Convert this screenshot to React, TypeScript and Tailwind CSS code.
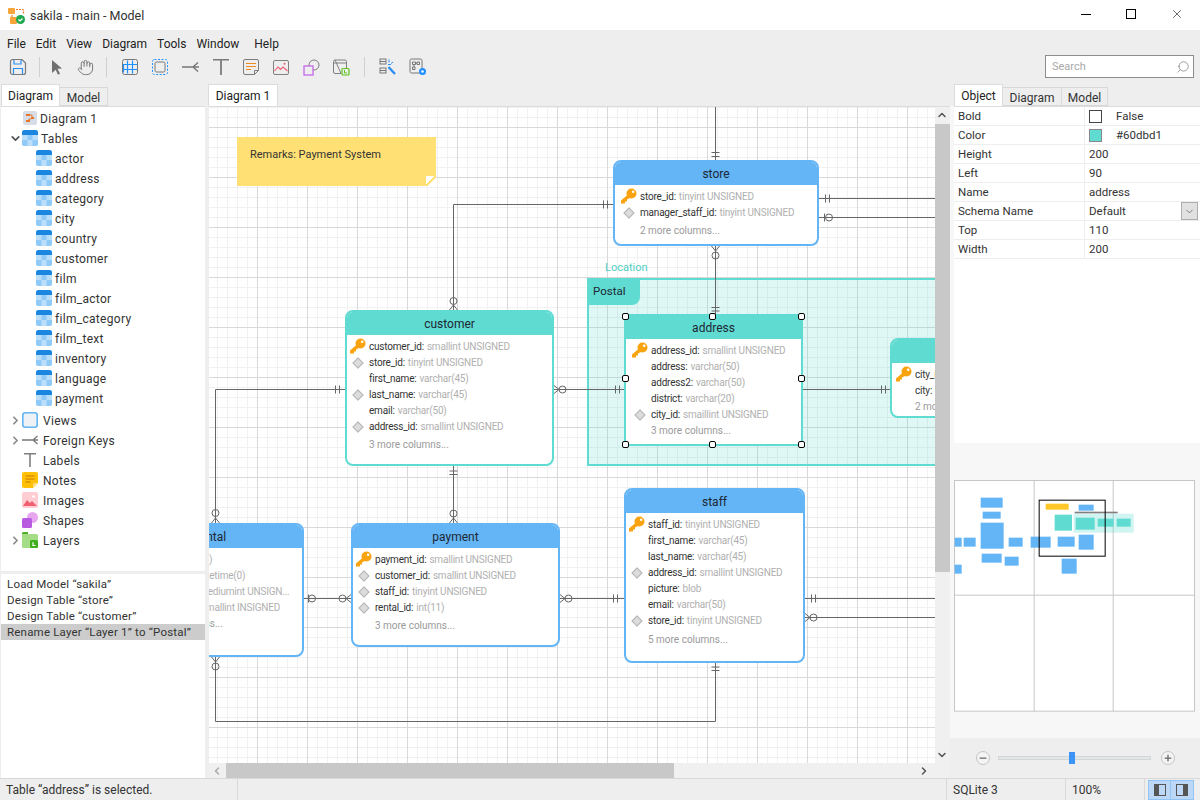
import { ChevronDown, ChevronLeft, ChevronRight, ChevronUp, Hand, Minus, Plus, Search, X } from "lucide-react"

type Column = [string, string, ("key" | "fk")?]

interface EntityProps {
  title: string
  teal?: boolean
  square?: boolean
  columns: Column[]
  more: string
  pos: string
  indent: string
  moreGap?: string
}

// Table box on the diagram canvas
function Entity({ title, teal, square, columns, more, pos, indent, moreGap = "mt-[2px]" }: EntityProps) {
  const edge = teal ? "border-[#60dbd1]" : "border-[#64b5f6]"
  const head = teal ? "bg-[#60dbd1]" : "bg-[#64b5f6]"
  return (
    <div className={`absolute overflow-hidden bg-white border-2 ${edge} ${square ? "" : "rounded-[8px]"} ${pos}`}>
      <div className={`-mt-[2px] -mx-[2px] h-[25px] pt-[2px] flex items-center justify-center text-[12px] text-[#1c2733] ${head}`}>{title}</div>
      <div className={`pt-[3px] ${indent}`}>
        {columns.map(([name, type, kind]) => (
          <div key={name} className="relative h-[16px] flex items-center whitespace-nowrap text-[10px] tracking-[-0.2px] leading-none">
            {kind === "key" && <KeyIcon />}
            {kind === "fk" && <div className="absolute -left-[15px] top-[5px] w-[8px] h-[8px] rotate-45 bg-[#dcdcdc] border border-[#b5b5b5]"></div>}
            <span className="mt-[2px] text-[#333]">{name}:</span>
            <span className="mt-[2px] ml-[3px] text-[#b0b0b0]">{type}</span>
          </div>
        ))}
        <div className={`h-[16px] pt-[2px] flex items-center whitespace-nowrap text-[10px] leading-none text-[#9a9a9a] ${moreGap}`}>{more}</div>
      </div>
    </div>
  )
}

function KeyIcon() {
  return (
    <svg className="absolute -left-[20px] top-0" width="17" height="16" viewBox="0 0 17 16">
      <circle cx="11.500" cy="5.500" r="5" fill="#f9a30f" />
      <path d="M8 6.500L1 12.500V15.500H5V13.500H7V11.500L11 9.500z" fill="#f9a30f" />
      <circle cx="13.200" cy="3.800" r="1.300" fill="#fff" />
    </svg>
  )
}

const vBars = (x: number, ys: number[]) => ys.map((y) => `M${x - 4} ${y}H${x + 4}`).join("")
const hBars = (y: number, xs: number[]) => xs.map((x) => `M${x} ${y - 4}V${y + 4}`).join("")

const wires =
  "M715.5 107V160M715.5 246V314M613 204.500H453.500V310M819 198.500H935M819 217.500H935M554 389.500H624M803 389.500H890M345 389.500H215.500V523M453.500 466V523M304 598.500H351M560 598.500H624M805 598.500H935M805 617.500H935M715.500 663V721.500H215.500V657"

const ticks = [
  vBars(715.5, [152.5, 156.5, 307.5, 311]),
  vBars(453.5, [471, 474.5]),
  vBars(715.5, [667, 670.5]),
  hBars(204.5, [603.5, 607.5]),
  hBars(198.5, [825.5, 829.5]),
  hBars(217.5, [824.5]),
  hBars(389.5, [615.5, 619.5, 881.5, 885.5, 335.5, 339.5]),
  hBars(598.5, [308.5, 613.5, 617.5, 811.5, 815.5]),
].join("")

const crows =
  "M449.500 310L453.500 305L457.500 310M211.500 523L215.500 518L219.500 523M449.500 523L453.500 518L457.500 523" +
  "M711.500 246L715.500 251L719.500 246M211.500 657L215.500 662L219.500 657" +
  "M554 385.500L559 389.500L554 393.500M351 594.500L346 598.500L351 602.500M560 594.500L565 598.500L560 602.500M805 613.500L810 617.500L805 621.500"

const circles = [
  [715.5, 255.5],
  [829, 217.5],
  [453.5, 301],
  [562.5, 389.5],
  [215.5, 513],
  [453.5, 513.5],
  [312, 598.5],
  [342.5, 598.5],
  [568.5, 598.5],
  [813.5, 617.5],
  [215.5, 666.5],
]

// Connector lines, in screen coordinates
function Relations() {
  return (
    <svg className="absolute left-0 top-0" width="726" height="656" viewBox="209 107 726 656" fill="none" stroke="#666" strokeWidth="1">
      <path d={wires} />
      <path d={ticks} />
      <path d={crows} />
      {circles.map(([cx, cy]) => (
        <circle key={`${cx}-${cy}`} cx={cx} cy={cy} r="3.5" />
      ))}
    </svg>
  )
}

function Handle({ pos }: { pos: string }) {
  return <div className={`absolute w-[7px] h-[7px] bg-white border-[1.5px] border-black rounded-[2px] ${pos}`}></div>
}

function Canvas() {
  return (
    <div className="relative w-[726px] h-full overflow-hidden bg-white [background-image:linear-gradient(#d9d9d9_1px,transparent_1px),linear-gradient(90deg,#d9d9d9_1px,transparent_1px),linear-gradient(#f1f1f1_1px,transparent_1px),linear-gradient(90deg,#f1f1f1_1px,transparent_1px)] [background-size:50px_50px,50px_50px,10px_10px,10px_10px] [background-position:48px_20px,48px_20px,8px_0px,8px_0px]">
      <div className="absolute left-[28px] top-[30px] w-[199px] h-[49px] bg-[#ffe074] pl-[13px] pt-[10px] text-[11px] text-[#333]">
        Remarks: Payment System
        <div className="absolute right-0 bottom-0 w-[10px] h-[10px] bg-[linear-gradient(135deg,#fff_0%,#fff_42%,#ffe074_42%,#ffe074_56%,#fff_56%)]"></div>
      </div>

      <div className="absolute left-[396px] top-[153px] text-[11px] text-[#4fcfc4]">Location</div>
      <div className="absolute left-[378px] top-[171px] w-[420px] h-[188px] border-2 border-[#60dbd1] bg-[#60dbd1]/20">
        <div className="-mt-[2px] -ml-[2px] w-[53px] h-[27px] pl-[6px] flex items-center bg-[#60dbd1] rounded-br-[8px] text-[11.5px] text-[#1c2733]">Postal</div>
      </div>

      <Relations />

      <Entity
        title="store"
        pos="left-[404px] top-[53px] w-[206px] h-[86px]"
        indent="pl-[25px]"
        columns={[
          ["store_id", "tinyint UNSIGNED", "key"],
          ["manager_staff_id", "tinyint UNSIGNED", "fk"],
        ]}
        more="2 more columns..."
      />
      <Entity
        title="customer"
        teal
        pos="left-[136px] top-[203px] w-[209px] h-[156px]"
        indent="pl-[22px]"
        columns={[
          ["customer_id", "smallint UNSIGNED", "key"],
          ["store_id", "tinyint UNSIGNED", "fk"],
          ["first_name", "varchar(45)"],
          ["last_name", "varchar(45)", "fk"],
          ["email", "varchar(50)"],
          ["address_id", "smallint UNSIGNED", "fk"],
        ]}
        more="3 more columns..."
      />
      <Entity
        title="address"
        teal
        square
        pos="left-[415px] top-[207px] w-[179px] h-[132px]"
        indent="pl-[25px]"
        moreGap="mt-0"
        columns={[
          ["address_id", "smallint UNSIGNED", "key"],
          ["address", "varchar(50)"],
          ["address2", "varchar(50)"],
          ["district", "varchar(20)"],
          ["city_id", "smaillint UNSIGNED", "fk"],
        ]}
        more="3 more columns..."
      />
      <Handle pos="left-[413px] top-[206px]" />
      <Handle pos="left-[500px] top-[206px]" />
      <Handle pos="left-[589px] top-[206px]" />
      <Handle pos="left-[413px] top-[268px]" />
      <Handle pos="left-[589px] top-[268px]" />
      <Handle pos="left-[413px] top-[334px]" />
      <Handle pos="left-[500px] top-[334px]" />
      <Handle pos="left-[589px] top-[334px]" />
      <Entity
        title="city"
        teal
        pos="left-[681px] top-[231px] w-[150px] h-[80px]"
        indent="pl-[23px]"
        columns={[
          ["city_id", "smallint UNSIGNED", "key"],
          ["city", "varchar(50)"],
        ]}
        more="2 more columns..."
        moreGap="mt-0"
      />
      <Entity
        title="staff"
        pos="left-[415px] top-[381px] w-[181px] h-[175px]"
        indent="pl-[22px]"
        moreGap="mt-[3px]"
        columns={[
          ["staff_id", "tinyint UNSIGNED", "key"],
          ["first_name", "varchar(45)"],
          ["last_name", "varchar(45)"],
          ["address_id", "smallint UNSIGNED", "fk"],
          ["picture", "blob"],
          ["email", "varchar(50)"],
          ["store_id", "tinyint UNSIGNED", "fk"],
        ]}
        more="5 more columns..."
      />
      <Entity
        title="payment"
        pos="left-[142px] top-[416px] w-[209px] h-[124px]"
        indent="pl-[22px]"
        columns={[
          ["payment_id", "smallint UNSIGNED", "key"],
          ["customer_id", "smallint UNSIGNED", "fk"],
          ["staff_id", "tinyint UNSIGNED", "fk"],
          ["rental_id", "int(11)", "fk"],
        ]}
        more="3 more columns..."
      />
      <Entity
        title="rental"
        pos="-left-[91px] top-[416px] w-[186px] h-[134px]"
        indent="pl-[23px]"
        moreGap="mt-0"
        columns={[
          ["rental_id", "int(11)", "key"],
          ["rental_date", "datetime(0)"],
          ["inventory_id", "mediumint UNSIGN...", "fk"],
          ["customer_id", "smallint INSIGNED", "fk"],
        ]}
        more="3 more columns..."
      />
    </div>
  )
}

function TableIcon({ className = "" }: { className?: string }) {
  return (
    <svg className={`shrink-0 ${className}`} width="16" height="16" viewBox="0 0 16 16">
      <rect width="16" height="16" rx="2.500" fill="#bbdefb" />
      <path d="M0 2.500A2.500 2.500 0 0 1 2.500 0h11A2.500 2.500 0 0 1 16 2.500V5H0z" fill="#1a86e0" />
      <path d="M5.500 5h5v5h-5zM0 10h5.500v6H2.500A2.500 2.500 0 0 1 0 13.500zM10.500 10H16v3.500a2.500 2.500 0 0 1-2.500 2.500h-3z" fill="#90caf9" />
    </svg>
  )
}

const tables = ["actor", "address", "category", "city", "country", "customer", "film", "film_actor", "film_category", "film_text", "inventory", "language", "payment"]

function Caret({ open }: { open?: boolean }) {
  return open ? (
    <ChevronDown className="shrink-0" size={13} strokeWidth={3.2} color="#555" />
  ) : (
    <ChevronRight className="shrink-0" size={13} strokeWidth={3.2} color="#8a8a8a" />
  )
}

function GroupRow({ icon, label, caret, open }: { icon: React.ReactNode; label: string; caret?: boolean; open?: boolean }) {
  return (
    <div className="h-[20px] flex items-center pl-[7px]">
      <div className="w-[14px] flex justify-center">{caret && <Caret open={open} />}</div>
      <div className="w-[16px] h-[16px] flex items-center justify-center">{icon}</div>
      <span className={`pt-[2px] ${open ? "ml-[3px]" : "ml-[5px]"}`}>{label}</span>
    </div>
  )
}

function Tree() {
  return (
    <div className="flex-1 bg-white text-[12px] text-[#333] pt-[1px] tracking-[0.3px]">
      <div className="h-[20px] flex items-center pl-[22px]">
        <svg width="14" height="14" viewBox="0 0 14 14">
          <rect width="14" height="14" rx="2" fill="#d6dde6" />
          <path d="M3 3h4v2H3zM8 6h3v2H8zM3 9h4v2H3z" fill="#e8742a" />
          <path d="M7 4h2v2M8 8H6v2" fill="none" stroke="#e8742a" />
        </svg>
        <span className="ml-[3px] pt-[2px]">Diagram 1</span>
      </div>
      <GroupRow label="Tables" caret open icon={<TableIcon />} />
      {tables.map((name) => (
        <div key={name} className="h-[20px] flex items-center pl-[35px]">
          <TableIcon />
          <span className="ml-[3px] pt-[2px]">{name}</span>
        </div>
      ))}
      <div className="h-[2px]"></div>
      <GroupRow
        label="Views"
        caret
        icon={
          <svg width="16" height="16" viewBox="0 0 16 16">
            <rect x="0.800" y="0.800" width="14.400" height="14.400" rx="2.500" fill="#eef1f5" stroke="#64b5f6" strokeWidth="1.600" />
          </svg>
        }
      />
      <GroupRow
        label="Foreign Keys"
        caret
        icon={
          <svg width="16" height="16" viewBox="0 0 16 16" fill="none" stroke="#777" strokeWidth="1.300">
            <path d="M0 8h16M15.500 4L11 8l4.500 4" />
          </svg>
        }
      />
      <GroupRow
        label="Labels"
        icon={
          <svg width="16" height="16" viewBox="0 0 16 16" fill="#808080">
            <path d="M2 1h12v1.500H8.800V15H7.200V2.500H2z" />
          </svg>
        }
      />
      <GroupRow
        label="Notes"
        icon={
          <svg width="16" height="16" viewBox="0 0 16 16">
            <path d="M2 0h12a2 2 0 0 1 2 2v9l-5 5H2a2 2 0 0 1-2-2V2a2 2 0 0 1 2-2z" fill="#ffc107" />
            <path d="M16 11h-3.500a1.500 1.500 0 0 0-1.500 1.500V16z" fill="#ffe082" />
            <path d="M3.500 4h9M3.500 7h9M3.500 10h5" stroke="#c77700" strokeWidth="1" />
          </svg>
        }
      />
      <GroupRow
        label="Images"
        icon={
          <svg width="16" height="16" viewBox="0 0 16 16">
            <rect width="16" height="16" rx="2" fill="#ffcdd2" />
            <path d="M1 14l4-6 3 3 2-2 5 5z" fill="#ef5f72" />
            <circle cx="11.500" cy="4.500" r="1.300" fill="#fff" />
          </svg>
        }
      />
      <GroupRow
        label="Shapes"
        icon={
          <svg width="16" height="16" viewBox="0 0 16 16">
            <circle cx="10.500" cy="5.500" r="5.500" fill="#e8a8f0" />
            <rect y="6" width="10" height="10" rx="1.500" fill="#b85be0" />
          </svg>
        }
      />
      <GroupRow
        label="Layers"
        caret
        icon={
          <svg width="16" height="16" viewBox="0 0 16 16">
            <path d="M1.500 0H6v2h8.500A1.500 1.500 0 0 1 16 3.500V16H1.500A1.500 1.500 0 0 1 0 14.500v-13A1.500 1.500 0 0 1 1.500 0z" fill="#a5dc86" />
            <path d="M0 2V1.500A1.500 1.500 0 0 1 1.500 0H6v2z" fill="#4caf25" />
            <rect x="8" y="8" width="8" height="8" rx="1.500" fill="#3fae1c" />
            <path d="M11 10.200v3.300h2.500" stroke="#fff" fill="none" strokeWidth="1.200" />
          </svg>
        }
      />
    </div>
  )
}

function History() {
  return (
    <div className="h-[204px] mt-[3px] bg-white pt-[2px] text-[11.5px] text-[#333] tracking-[0.2px]">
      <div className="h-[16px] pl-[6px] pt-[2px] flex items-center">Load Model “sakila”</div>
      <div className="h-[16px] pl-[6px] pt-[2px] flex items-center">Design Table “store”</div>
      <div className="h-[16px] pl-[6px] pt-[2px] flex items-center">Design Table “customer”</div>
      <div className="h-[16px] pl-[6px] pt-[2px] flex items-center bg-[#cccccc]">Rename Layer “Layer 1” to “Postal”</div>
    </div>
  )
}

function Tab({ label, active, width }: { label: string; active?: boolean; width: string }) {
  return active ? (
    <div className={`h-[22px] bg-white border border-b-0 border-[#dcdcdc] flex items-center justify-center text-[12px] text-[#222] ${width}`}>{label}</div>
  ) : (
    <div className={`h-[19px] pt-[2px] bg-[#eeeeee] border border-l-0 border-[#d8d8d8] flex items-center justify-center text-[12px] text-[#333] ${width}`}>{label}</div>
  )
}

function ToolIcon({ children, width = "w-[30px]" }: { children: React.ReactNode; width?: string }) {
  return <div className={`h-[24px] flex items-center justify-center ${width}`}>{children}</div>
}

function Toolbar() {
  return (
    <div className="h-[30px] flex items-start pt-[1px] pl-[3px] relative">
      <ToolIcon>
        <svg width="18" height="18" viewBox="0 0 18 18" fill="none">
          <path d="M3 1.500h10l3.500 3.500v9.500a2 2 0 0 1-2 2h-11a2 2 0 0 1-2-2v-11a2 2 0 0 1 2-2z" stroke="#7a7a7a" strokeWidth="1.200" />
          <path d="M5 2v4h7V2" stroke="#2b8ef0" strokeWidth="1.200" />
          <path d="M4.500 16v-5.500h9V16" stroke="#2b8ef0" strokeWidth="1.200" />
        </svg>
      </ToolIcon>
      <div className="w-px h-[20px] mt-[2px] bg-[#d0d0d0] ml-[6px] mr-[3px]"></div>
      <ToolIcon width="w-[28px]">
        <svg width="12" height="15" viewBox="0 0 12 15" fill="#707070">
          <path d="M1 0l10 8.500-4.500.3 2.500 5-2 1-2.300-5L1 13z" />
        </svg>
      </ToolIcon>
      <ToolIcon width="w-[28px]">
        <Hand size={17} strokeWidth={1.4} color="#777" />
      </ToolIcon>
      <div className="w-px h-[20px] mt-[2px] bg-[#d0d0d0] ml-[7px] mr-[8px]"></div>
      <ToolIcon>
        <svg width="16" height="16" viewBox="0 0 16 16" fill="none">
          <rect x="0.500" y="0.500" width="15" height="15" rx="2" stroke="#777" />
          <path d="M1 5.500h14M1 10.500h14M5.500 1.500v13M10.500 1.500v13M1.500 5.500v8" stroke="#1e90ff" strokeWidth="1.200" />
        </svg>
      </ToolIcon>
      <ToolIcon>
        <svg width="16" height="16" viewBox="0 0 16 16" fill="none">
          <rect x="0.500" y="0.500" width="15" height="15" rx="2" stroke="#1e90ff" strokeDasharray="2 1.500" />
          <rect x="3" y="3" width="10" height="10" rx="1.500" stroke="#777" />
        </svg>
      </ToolIcon>
      <ToolIcon>
        <svg width="17" height="12" viewBox="0 0 17 12" fill="none" stroke="#777" strokeWidth="1.400">
          <path d="M0 6h17M16 1.500L11 6l5 4.500" />
        </svg>
      </ToolIcon>
      <div className="w-px"></div>
      <ToolIcon>
        <svg width="16" height="16" viewBox="0 0 16 16" fill="#7a7a7a">
          <path d="M0 0h16v1.600H8.900V16H7.100V1.600H0z" />
        </svg>
      </ToolIcon>
      <ToolIcon>
        <svg width="16" height="16" viewBox="0 0 16 16" fill="none">
          <path d="M2 .5h12A1.500 1.500 0 0 1 15.500 2v9.500l-4 4H2A1.500 1.500 0 0 1 .5 14V2A1.500 1.500 0 0 1 2 .5z" stroke="#7d7d7d" />
          <path d="M3 4.500h10M3 7.500h10M3 10.500h5" stroke="#f08a1c" />
          <path d="M11.500 15.500v-4h4" stroke="#7d7d7d" />
        </svg>
      </ToolIcon>
      <ToolIcon>
        <svg width="16" height="15" viewBox="0 0 16 15" fill="none">
          <rect x="0.500" y="0.500" width="15" height="14" rx="1.500" stroke="#808080" />
          <path d="M1.500 11l3.500-4 2.500 2.500L10 7l4.500 4" stroke="#ef5f72" strokeWidth="1.100" />
          <circle cx="11.500" cy="3.800" r="1" fill="#ef5f72" />
        </svg>
      </ToolIcon>
      <ToolIcon>
        <svg width="17" height="17" viewBox="0 0 17 17" fill="none">
          <circle cx="11" cy="6" r="5" stroke="#808080" />
          <rect x="1" y="7" width="9" height="9" fill="#eeeeee" stroke="#c05ce8" strokeWidth="1.200" />
        </svg>
      </ToolIcon>
      <ToolIcon>
        <svg width="17" height="17" viewBox="0 0 17 17" fill="none">
          <path d="M2 1h10a1.500 1.500 0 0 1 1.500 1.500V9M8 14.500H2A1.500 1.500 0 0 1 .5 13V2.500A1.500 1.500 0 0 1 2 1zM1 4h12" stroke="#808080" />
          <rect x="9" y="9.500" width="7" height="6.500" rx="1" fill="#eeeeee" stroke="#5cc41a" strokeWidth="1.200" />
          <path d="M11.500 11v3H14" stroke="#5cc41a" />
        </svg>
      </ToolIcon>
      <div className="w-px h-[20px] mt-[2px] bg-[#d0d0d0] ml-[8px] mr-[8px]"></div>
      <ToolIcon>
        <svg width="18" height="18" viewBox="0 0 18 18" fill="none">
          <rect x="1" y="1" width="6" height="5" stroke="#777" />
          <path d="M1 3.500h6" stroke="#777" />
          <rect x="1" y="10" width="6" height="5" stroke="#777" />
          <path d="M1 12.500h6" stroke="#777" />
          <path d="M9.500 9l6.500 7" stroke="#2b8ef0" strokeWidth="2.400" />
          <path d="M10 1.500v3M14 4l-2 1.500M9 6.500h3" stroke="#2b8ef0" />
        </svg>
      </ToolIcon>
      <ToolIcon>
        <svg width="18" height="18" viewBox="0 0 18 18" fill="none">
          <rect x="1" y="1" width="12" height="14" rx="1.500" stroke="#777" />
          <path d="M3.500 4h3v2.500h-3zM8 4h2.500v2.500H8zM3.500 9h2.500v2.500H3.500zM6.500 5.200H8M5 6.500V9" stroke="#777" />
          <circle cx="13.500" cy="13.500" r="3.500" fill="#1e90ff" />
          <circle cx="13.500" cy="13.500" r="1.300" fill="#fff" />
        </svg>
      </ToolIcon>
      <div className="absolute right-[6px] top-[1px] w-[149px] h-[23px] bg-white border border-[#8c8c8c] flex items-center justify-between pl-[6px] pr-[3px] text-[11px] text-[#a8a8a8]">
        <span className="pt-[2px]">Search</span>
        <Search size={14} strokeWidth={1.2} color="#777" className="-scale-x-100" />
      </div>
    </div>
  )
}

const props: [string, string][] = [
  ["Height", "200"],
  ["Left", "90"],
  ["Name", "address"],
]

function PropRow({ label, children }: { label: string; children: React.ReactNode }) {
  return (
    <div className="relative h-[19px] grid grid-cols-[131px_1fr] border-b border-[#eeeeee]">
      <div className="pl-[4px] pt-[1px] flex items-center border-r border-[#eeeeee]">{label}</div>
      <div className="pl-[4px] pt-[1px] flex items-center">{children}</div>
    </div>
  )
}

function PropertyGrid() {
  return (
    <div className="h-[337px] bg-white text-[11.5px] text-[#333] border-t border-[#dcdcdc]">
      <PropRow label="Bold">
        <div className="w-[13px] h-[13px] border border-[#444] bg-white"></div>
        <span className="ml-[14px]">False</span>
      </PropRow>
      <PropRow label="Color">
        <div className="w-[13px] h-[13px] border border-[#888] bg-[#60dbd1]"></div>
        <span className="ml-[14px]">#60dbd1</span>
      </PropRow>
      {props.map(([label, value]) => (
        <PropRow key={label} label={label}>
          {value}
        </PropRow>
      ))}
      <PropRow label="Schema Name">
        Default
        <div className="absolute right-[2px] top-0 w-[17px] h-[18px] bg-[#e1e1e1] border border-[#adadad] flex items-center justify-center">
          <ChevronDown size={11} strokeWidth={1.5} color="#555" />
        </div>
      </PropRow>
      <PropRow label="Top">110</PropRow>
      <PropRow label="Width">200</PropRow>
    </div>
  )
}

const miniBlue = [
  [93, 84, 66, 30],
  [99, 126, 54, 21],
  [93, 159, 69, 78],
  [15, 204, 21, 27],
  [42, 204, 36, 27],
  [177, 204, 42, 27],
  [243, 201, 60, 33],
  [96, 252, 60, 27],
  [165, 261, 42, 27],
  [15, 285, 21, 27],
  [324, 201, 51, 30],
  [387, 195, 45, 45],
  [336, 267, 45, 45],
  [387, 105, 45, 18],
]

const miniTeal = [
  [315, 135, 52, 48],
  [378, 144, 57, 36],
  [444, 147, 48, 24],
  [501, 147, 42, 24],
]

function Minimap() {
  return (
    <svg className="mt-[37px] shrink-0" width="241" height="232" viewBox="13 31 723 696">
      <rect x="14.500" y="32.500" width="720" height="692" fill="#fff" stroke="#c6c6c6" strokeWidth="3" />
      <path d="M253.500 32V725M490.500 32V725M14 376.500H735" stroke="#c6c6c6" strokeWidth="3" />
      <rect x="372" y="132" width="180" height="57" fill="#60dbd1" fillOpacity="0.3" />
      {miniBlue.map(([x, y, w, h]) => (
        <rect key={`${x}-${y}`} x={x} y={y} width={w} height={h} fill="#64b5f6" />
      ))}
      {miniTeal.map(([x, y, w, h]) => (
        <rect key={`${x}-${y}`} x={x} y={y} width={w} height={h} fill="#60dbd1" />
      ))}
      <rect x="288" y="102" width="69" height="18" fill="#ffc727" />
      <rect x="375" y="126" width="129" height="5" fill="#808080" />
      <rect x="268.500" y="91.500" width="198" height="168" fill="none" stroke="#000" strokeWidth="3" />
    </svg>
  )
}

function ZoomBar() {
  return (
    <div className="h-[40px] bg-[#eeeeee] mt-[26px] -ml-[4px] pl-[26px] flex items-center">
      <div className="w-[14px] h-[14px] rounded-full border border-[#c4c4c4] bg-[#f4f4f4] flex items-center justify-center">
        <Minus size={10} strokeWidth={3} color="#666" />
      </div>
      <div className="relative w-[153px] h-[4px] ml-[8px] bg-[#e2e6e6] border border-[#d2d6d6]">
        <div className="absolute left-[70px] -top-[5px] w-[6px] h-[12px] bg-[#3d94f6]"></div>
      </div>
      <div className="w-[14px] h-[14px] ml-[10px] rounded-full border border-[#c4c4c4] bg-[#f4f4f4] flex items-center justify-center">
        <Plus size={10} strokeWidth={3} color="#666" />
      </div>
    </div>
  )
}

function StatusBar() {
  return (
    <div className="h-[22px] shrink-0 border-t border-[#d8d8d8] flex items-center text-[12px] text-[#333]">
      <div className="w-[238px] h-full pl-[6px] flex items-center border-r border-[#d8d8d8]">Table “address” is selected.</div>
      <div className="w-[709px] h-full border-r border-[#d8d8d8]"></div>
      <div className="w-[119px] h-full pl-[6px] flex items-center border-r border-[#d8d8d8]">SQLite 3</div>
      <div className="w-[79px] h-full pl-[6px] flex items-center border-r border-[#d8d8d8]">100%</div>
      <div className="ml-[3px] flex h-[20px]">
        <div className="w-[23px] bg-[#bcd8f6] border border-[#90c5f5] flex items-center justify-center">
          <div className="w-[12px] h-[12px] border border-[#555] flex">
            <div className="w-[4px] bg-[#555]"></div>
          </div>
        </div>
        <div className="w-[23px] bg-[#bcd8f6] border border-l-0 border-[#90c5f5] flex items-center justify-center">
          <div className="w-[12px] h-[12px] border border-[#555] flex justify-end">
            <div className="w-[4px] bg-[#555]"></div>
          </div>
        </div>
      </div>
    </div>
  )
}

export default function App() {
  return (
    <div className="w-[1200px] h-[800px] flex flex-col overflow-hidden bg-[#eeeeee] font-['Roboto',sans-serif]">
      <div className="h-[30px] bg-white flex items-center shrink-0 relative">
        <svg className="ml-[8px]" width="17" height="17" viewBox="0 0 17 17">
          <rect x="0" y="1" width="7" height="6" rx="1" fill="#f6a53b" />
          <rect x="2" y="10" width="7" height="7" rx="1" fill="#f6a53b" />
          <path d="M8 2.500h6.500a1 1 0 0 1 1 1V7M4 8v2" fill="none" stroke="#e8742a" strokeWidth="1.200" strokeDasharray="2 1" />
          <circle cx="12.500" cy="12.500" r="4.500" fill="#1fa84f" />
          <path d="M10.500 12.500l1.500 1.500 2.500-2.500" fill="none" stroke="#fff" strokeWidth="1.200" />
        </svg>
        <span className="ml-[5px] pt-[2px] text-[12.5px] text-[#333]">sakila - main - Model</span>
        <div className="absolute left-[1081px] top-[14px] w-[10px] h-px bg-black"></div>
        <div className="absolute left-[1126px] top-[9px] w-[10px] h-[10px] border border-black"></div>
        <X className="absolute left-[1170px] top-[7px]" size={14} strokeWidth={1} color="#000" />
      </div>

      <div className="h-[24px] flex items-center gap-[10px] pt-[4px] pl-[7px] text-[12px] text-[#222] shrink-0">
        <span>File</span>
        <span>Edit</span>
        <span>View</span>
        <span>Diagram</span>
        <span>Tools</span>
        <span>Window</span>
        <span className="ml-[5px]">Help</span>
      </div>

      <Toolbar />

      <div className="flex-1 flex min-h-0">
        <div className="w-[208px] shrink-0 flex flex-col">
          <div className="h-[22px] pl-[1px] flex items-end">
            <Tab label="Diagram" active width="w-[59px]" />
            <Tab label="Model" width="w-[48px]" />
          </div>
          <div className="flex-1 flex flex-col min-h-0 ml-px mr-[3px] border-t border-[#dcdcdc]">
            <Tree />
            <History />
          </div>
        </div>

        <div className="w-[742px] shrink-0 flex flex-col">
          <div className="h-[22px] flex items-end">
            <Tab label="Diagram 1" active width="w-[70px]" />
          </div>
          <div className="flex-1 flex min-h-0 ml-px border-t border-[#dcdcdc]">
            <Canvas />
            <div className="relative w-[15px] bg-[#f0f0f0]">
              <ChevronUp className="absolute left-[1px] top-[2px]" size={12} strokeWidth={3} color="#555" />
              <div className="absolute left-0 top-[17px] w-[15px] h-[448px] bg-[#c8c8c8]"></div>
              <ChevronDown className="absolute left-[1px] bottom-[2px]" size={12} strokeWidth={3} color="#555" />
            </div>
          </div>
          <div className="relative h-[15px] ml-px bg-[#f0f0f0]">
            <ChevronLeft className="absolute left-[2px] top-[2px]" size={12} strokeWidth={3} color="#aaa" />
            <div className="absolute left-[17px] top-0 w-[448px] h-[15px] bg-[#c8c8c8]"></div>
            <ChevronRight className="absolute right-[20px] top-[2px]" size={12} strokeWidth={3} color="#555" />
          </div>
        </div>

        <div className="w-[250px] shrink-0 pl-[4px] flex flex-col bg-[#f7f7f7]">
          <div className="h-[22px] -ml-[4px] pl-[4px] flex items-end bg-[#eeeeee]">
            <Tab label="Object" active width="w-[49px]" />
            <Tab label="Diagram" width="w-[59px]" />
            <Tab label="Model" width="w-[46px]" />
          </div>
          <PropertyGrid />
          <Minimap />
          <ZoomBar />
        </div>
      </div>

      <StatusBar />
    </div>
  )
}
